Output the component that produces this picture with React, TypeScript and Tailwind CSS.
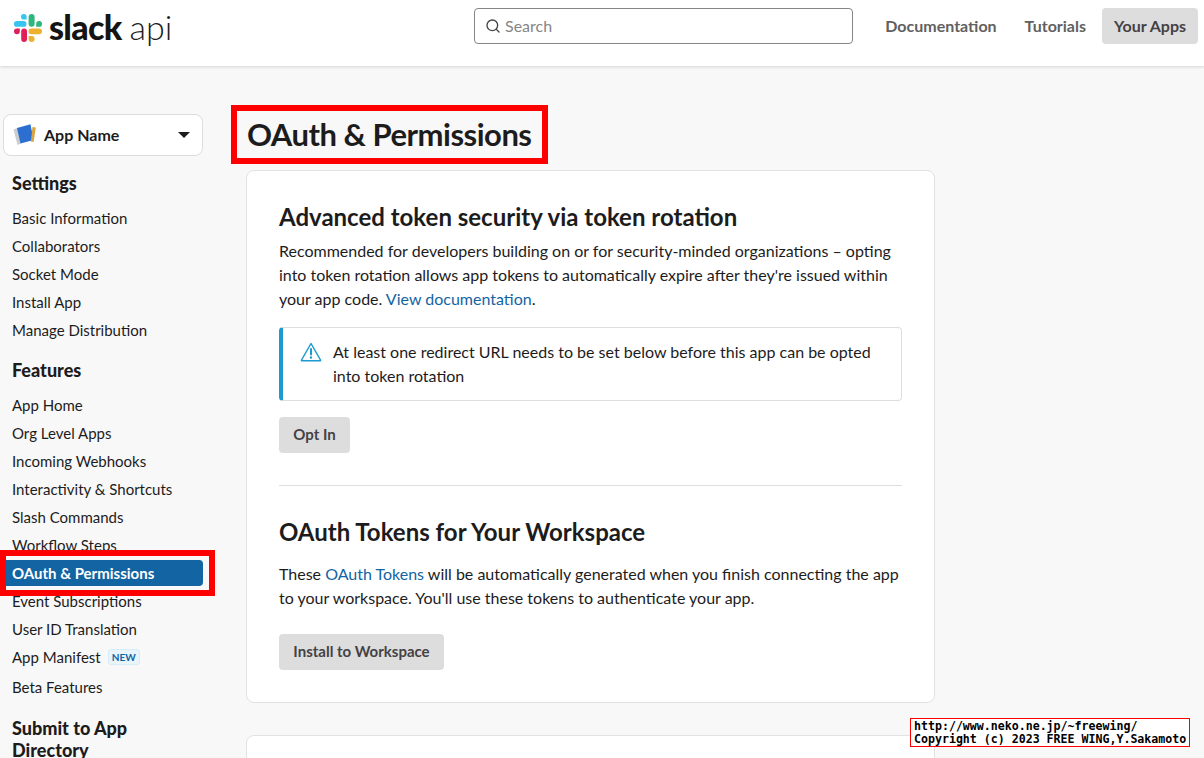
import React from "react";
import { Search } from "lucide-react";

function Logo() {
  return (
    <svg width="28" height="28" viewBox="0 0 28 28" className="shrink-0">
      <rect x="0" y="7" width="12.5" height="5.8" rx="2.9" fill="#36c5f0" />
      <path d="M9.8 0 a2.8 2.8 0 0 1 2.8 2.8 V5.6 H9.8 a2.8 2.8 0 0 1 0 -5.6 Z" fill="#36c5f0" />
      <rect x="14.6" y="0" width="6" height="12.8" rx="3" fill="#2eb67d" />
      <path d="M22.2 12.8 V10 a2.9 2.9 0 1 1 2.9 2.8 Z" fill="#2eb67d" />
      <path d="M5.8 14.4 V17.2 a2.9 2.9 0 1 1 -2.9 -2.8 Z" fill="#e01e5a" />
      <rect x="7.2" y="14.4" width="5.8" height="13.6" rx="2.9" fill="#e01e5a" />
      <rect x="14.6" y="14.4" width="13.4" height="5.8" rx="2.9" fill="#ecb22e" />
      <path d="M14.6 22 H17.6 a3 3 0 1 1 -3 3 Z" fill="#ecb22e" />
    </svg>
  );
}

function Book() {
  return (
    <svg width="24" height="22" viewBox="0 0 24 22" className="shrink-0">
      <path d="M0.5 5.5 L5 3.8 L8 19.5 L4.5 21 Z" fill="#c9ced3" />
      <path d="M4 4 L17.5 0.3 L20.5 16 L7.5 19.5 Z" fill="#2d6fd0" />
      <path d="M19.5 3 L22.8 3.4 L20.6 18 L17.8 17.6 Z" fill="#d9a441" />
    </svg>
  );
}

function NavItem({ children, active }: { children: React.ReactNode; active?: boolean }) {
  return (
    <a
      className={
        active
          ? "my-px flex h-[26px] items-center rounded-r-[4px] bg-[#1264a3] pl-[9px] text-[15px] font-bold text-white"
          : "flex h-7 items-center pl-[9px] text-[15px] text-[#1d1c1d]"
      }
    >
      {children}
    </a>
  );
}

function SideHead({ children, className }: { children: React.ReactNode; className?: string }) {
  return <h3 className={"pl-[9px] text-[18px] font-black leading-[22px] text-[#1d1c1d] " + (className ?? "")}>{children}</h3>;
}

export default function App() {
  return (
    <div className="relative h-[758px] w-[1204px] overflow-hidden bg-[#f8f8f8] font-['Lato',sans-serif] text-[#1d1c1d]">
      <header className="relative flex h-[66px] items-center bg-white pl-[14px] pr-[6px] shadow-[0_1px_3px_rgba(0,0,0,0.15)]">
        <div className="mb-[10px] flex w-[460px] items-center">
          <Logo />
          <span className="mb-[3px] ml-[7px] text-[34px] font-black leading-none tracking-[-0.7px] text-[#141414]">slack</span>
          <span className="mb-[3px] ml-[8px] text-[34px] font-light leading-none text-[#1d1c1d]">api</span>
        </div>
        <div className="mb-[15px] flex h-9 w-[379px] items-center rounded-[4px] border border-[#868686] bg-white pl-[10px]">
          <Search size={16} strokeWidth={2} className="text-[#454245]" />
          <span className="ml-[4px] text-[16px] text-[#868686]">Search</span>
        </div>
        <nav className="mb-[15px] ml-auto flex items-center text-[16px] font-bold text-[#616061]">
          <a className="mr-[28px]">Documentation</a>
          <a className="mr-[16px]">Tutorials</a>
          <a className="flex h-9 w-[96px] items-center justify-center rounded-[4px] bg-[#dddddd] text-[#454245]">Your Apps</a>
        </nav>
      </header>

      <div className="flex">
        <aside className="ml-[3px] w-[200px] shrink-0 pt-[48px]">
          <div className="flex h-[42px] items-center rounded-[8px] border border-[#dddddd] bg-white pl-[9px] pr-3">
            <Book />
            <span className="ml-[7px] text-[16px] font-bold">App Name</span>
            <span className="ml-auto h-0 w-0 border-x-[6px] border-t-[6px] border-x-transparent border-t-[#1d1c1d]" />
          </div>
          <SideHead className="mt-[16px]">Settings</SideHead>
          <div className="mt-[10px]">
            <NavItem>Basic Information</NavItem>
            <NavItem>Collaborators</NavItem>
            <NavItem>Socket Mode</NavItem>
            <NavItem>Install App</NavItem>
            <NavItem>Manage Distribution</NavItem>
          </div>
          <SideHead className="mt-[15px]">Features</SideHead>
          <div className="mt-[10px]">
            <NavItem>App Home</NavItem>
            <NavItem>Org Level Apps</NavItem>
            <NavItem>Incoming Webhooks</NavItem>
            <NavItem>Interactivity &amp; Shortcuts</NavItem>
            <NavItem>Slash Commands</NavItem>
            <NavItem>Workflow Steps</NavItem>
            <NavItem active>OAuth &amp; Permissions</NavItem>
            <NavItem>Event Subscriptions</NavItem>
            <NavItem>User ID Translation</NavItem>
            <a className="flex h-7 items-center pl-[9px] text-[15px] text-[#1d1c1d]">
              App Manifest
              <span className="ml-[7px] flex h-[16px] items-center rounded-[3px] border border-[#d6ecf7] bg-[#e8f5fa] px-[3px] text-[10px] font-bold text-[#1264a3]">NEW</span>
            </a>
            <NavItem><span className="pt-[4px]">Beta Features</span></NavItem>
          </div>
          <SideHead className="mt-[18px]">Submit to App Directory</SideHead>
        </aside>

        <main className="ml-[43px] w-[689px] shrink-0 pt-[44px]">
          <h1 className="ml-px text-[31px] font-bold leading-[48px] tracking-[-0.5px] text-[#1d1c1d]">OAuth &amp; Permissions</h1>
          <section className="mt-[12px] h-[533px] rounded-[8px] border border-[#e2e2e2] bg-white px-[32px] pt-[31px]">
            <h2 className="text-[24px] font-bold leading-[30px]">Advanced token security via token rotation</h2>
            <p className="mt-[7px] text-[16px] leading-[24px]">
              Recommended for developers building on or for security-minded organizations – opting into token rotation allows app tokens to automatically expire after they're issued within your app code. <a className="text-[#1264a3]">View documentation</a>.
            </p>
            <div className="mt-[16px] flex h-[74px] rounded-[4px] border border-l-[4px] border-[#dddddd] border-l-[#1d9bd1] pl-[17px] pt-[12px]">
              <svg width="22" height="20" viewBox="0 0 22 20" fill="none" stroke="#1d9bd1" strokeWidth="1.5" className="mt-[2px] shrink-0">
                <path d="M11 1.5 L20.5 18 Q20.8 18.8 20 18.8 L2 18.8 Q1.2 18.8 1.5 18 Z" strokeLinejoin="round" />
                <path d="M11 7 V12.5" strokeWidth="2" strokeLinecap="round" />
                <circle cx="11" cy="15.5" r="0.6" strokeWidth="1.2" fill="#1d9bd1" />
              </svg>
              <p className="ml-[11px] text-[16px] leading-[24px]">
                At least one redirect URL needs to be set below before this app can be opted<br />into token rotation
              </p>
            </div>
            <button className="mt-[16px] h-9 w-[71px] rounded-[4px] bg-[#dddddd] pb-[2px] text-[15px] font-bold text-[#454245]">Opt In</button>
            <hr className="mt-[32px] border-t border-[#dddddd]" />
            <h2 className="mt-[31px] text-[24px] font-bold leading-[30px]">OAuth Tokens for Your Workspace</h2>
            <p className="mt-[15px] text-[16px] leading-[24px]">
              These <a className="text-[#1264a3]">OAuth Tokens</a> will be automatically generated when you finish connecting the app to your workspace. You'll use these tokens to authenticate your app.
            </p>
            <button className="mt-[24px] h-9 w-[165px] rounded-[4px] bg-[#dddddd] pb-[2px] text-[15px] font-bold text-[#454245]">Install to Workspace</button>
          </section>
          <section className="mt-[32px] h-[100px] rounded-[8px] border border-[#e2e2e2] bg-white" />
        </main>
      </div>

      <div className="absolute left-[231px] top-[105px] h-[59px] w-[317px] border-[6px] border-[#ff0000]" />
      <div className="absolute left-0 top-[550px] h-[46px] w-[215px] border-[6px] border-[#ff0000]" />

      <div className="absolute left-[910px] top-[718px] h-[29px] w-[280px] border border-[#ff0000] bg-white pl-[3px] pt-px font-['DejaVu_Sans_Mono',monospace] text-[11.6px] font-bold leading-[13px] text-black">
        <div className="whitespace-pre">http://www.neko.ne.jp/~freewing/</div>
        <div className="whitespace-pre">Copyright (c) 2023 FREE WING,Y.Sakamoto</div>
      </div>
    </div>
  );
}
